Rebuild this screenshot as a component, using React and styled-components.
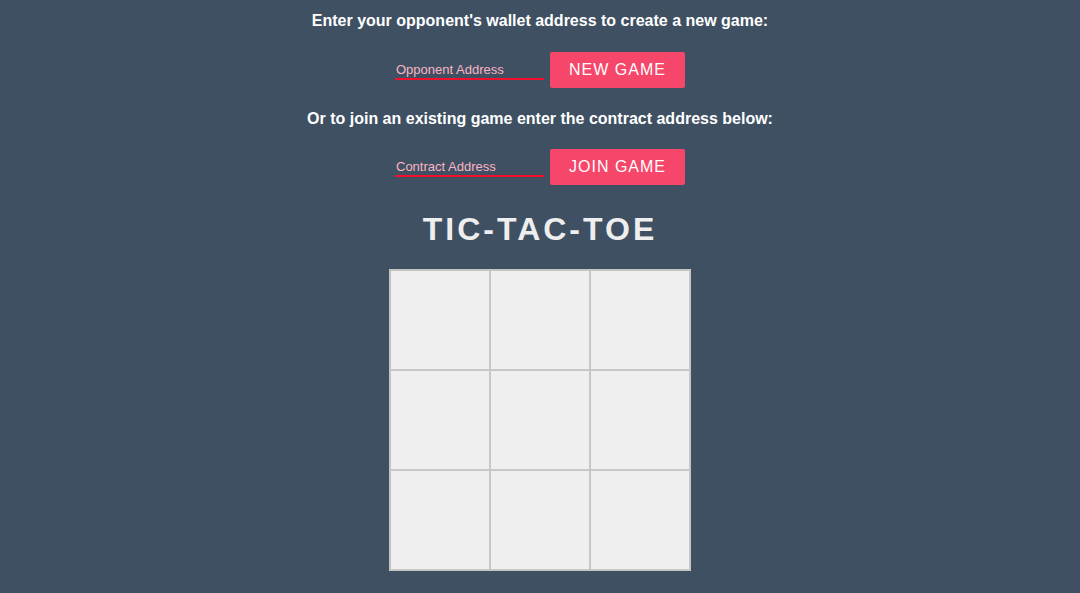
import styled, { createGlobalStyle } from "styled-components";

const Global = createGlobalStyle`
  body {
    margin: 0;
    background: #3e5062;
    font-family: "Liberation Sans", Arial, sans-serif;
  }
`;

const Page = styled.div`
  display: flex;
  flex-direction: column;
  align-items: center;
  padding-top: 12px;
`;

const Prompt = styled.p`
  margin: 0;
  color: #fff;
  font-size: 16px;
  font-weight: bold;
  line-height: 18px;
`;

const Row = styled.div`
  display: flex;
  align-items: flex-end;
  gap: 6px;
  margin: ${(p) => (p.$first ? "22px 0 22px" : "21px 0 24px")};
`;

const Field = styled.input`
  width: 149px;
  box-sizing: border-box;
  margin-bottom: 8px;
  padding: 0 1px 1px;
  border: none;
  border-bottom: 2px solid #f2102c;
  background: transparent;
  color: #fff;
  font-family: "Liberation Sans", Arial, sans-serif;
  font-size: 13px;
  line-height: 15px;
  outline: none;
  &::placeholder {
    color: #fbb4c4;
  }
`;

const Button = styled.button`
  width: 135px;
  height: 36px;
  border: none;
  border-radius: 2px;
  background: #f6466a;
  color: #fff;
  font-family: "Liberation Sans", Arial, sans-serif;
  font-size: 16px;
  letter-spacing: 1px;
  cursor: pointer;
`;

const Title = styled.h1`
  margin: 2px 0 22px;
  color: #eee;
  font-size: 32px;
  line-height: 36px;
  letter-spacing: 3px;
  font-weight: bold;
`;

const Board = styled.div`
  display: grid;
  grid-template-columns: repeat(3, 100px);
  grid-template-rows: repeat(3, 100px);
  border: 1px solid #c4c4c4;
`;

const Cell = styled.div`
  box-sizing: border-box;
  background: #efefef;
  border: 1px solid #c9c9c9;
  border-top-color: #c4c4c4;
  border-left-color: #c4c4c4;
`;

export default function App() {
  return (
    <Page>
      <Global />
      <Prompt>Enter your opponent's wallet address to create a new game:</Prompt>
      <Row $first>
        <Field placeholder="Opponent Address" />
        <Button>NEW GAME</Button>
      </Row>
      <Prompt>Or to join an existing game enter the contract address below:</Prompt>
      <Row>
        <Field placeholder="Contract Address" />
        <Button>JOIN GAME</Button>
      </Row>
      <Title>TIC-TAC-TOE</Title>
      <Board>
        {Array.from({ length: 9 }, (_, i) => (
          <Cell key={i} />
        ))}
      </Board>
    </Page>
  );
}
